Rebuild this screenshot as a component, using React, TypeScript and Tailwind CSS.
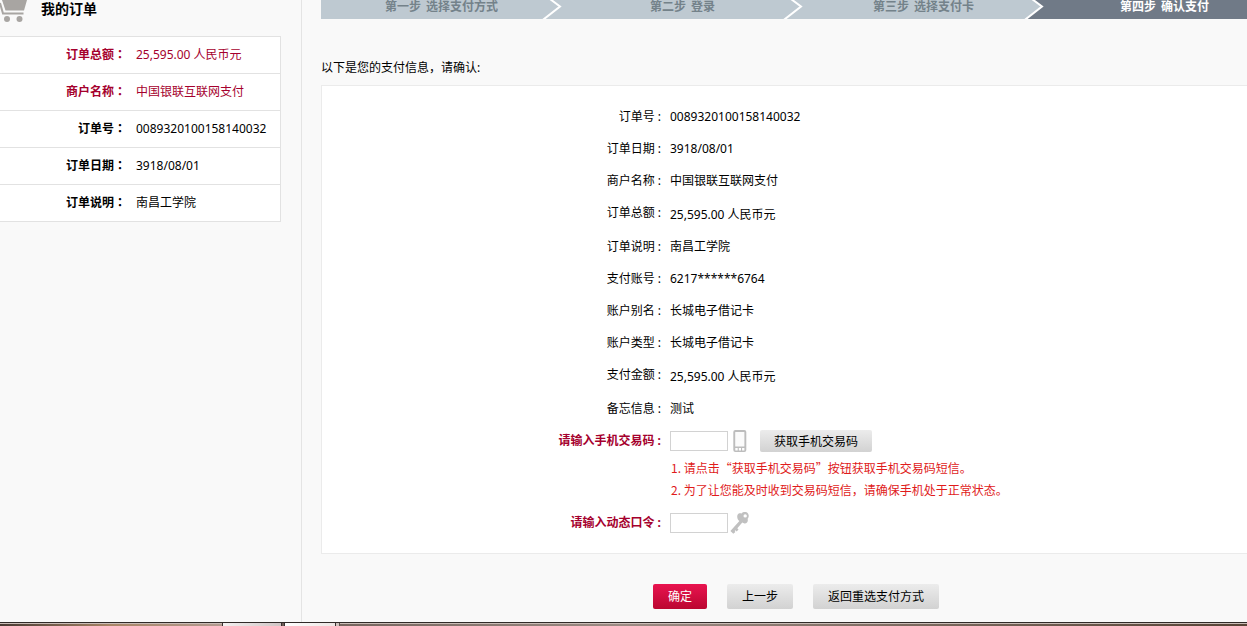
import React from "react";

const latinFirst = "font-['Noto_Sans','Noto_Sans_CJK_SC',sans-serif]";
const cjkFirst = "font-['Noto_Sans_CJK_SC',sans-serif]";
const centredColon = "font-['Noto_Sans_CJK_TC',sans-serif]";

const order = [
  { label: "订单总额", value: "25,595.00 人民币元", strong: true },
  { label: "商户名称", value: "中国银联互联网支付", strong: true },
  { label: "订单号", value: "0089320100158140032", strong: false },
  { label: "订单日期", value: "3918/08/01", strong: false },
  { label: "订单说明", value: "南昌工学院", strong: false },
];

const details = [
  { label: "订单号", value: "0089320100158140032" },
  { label: "订单日期", value: "3918/08/01" },
  { label: "商户名称", value: "中国银联互联网支付" },
  { label: "订单总额", value: "25,595.00 人民币元", amount: true },
  { label: "订单说明", value: "南昌工学院" },
  { label: "支付账号", value: "6217******6764" },
  { label: "账户别名", value: "长城电子借记卡" },
  { label: "账户类型", value: "长城电子借记卡" },
  { label: "支付金额", value: "25,595.00 人民币元", amount: true },
  { label: "备忘信息", value: "测试" },
];

const steps = [
  ["第一步", "选择支付方式"],
  ["第二步", "登录"],
  ["第三步", "选择支付卡"],
  ["第四步", "确认支付"],
];

function CartIcon() {
  return (
    <svg className="h-6 w-[30px] shrink-0" viewBox="0 0 30 24" aria-hidden="true">
      <path d="M2 0H27L24 10.500H5.500Z" fill="#a8a5a2" />
      <path d="M0 3L3 13.500H23.500" fill="none" stroke="#a8a5a2" strokeWidth="2" />
      <circle cx="7" cy="19" r="3" fill="#a8a5a2" />
      <circle cx="19.500" cy="19" r="3" fill="#a8a5a2" />
    </svg>
  );
}

function PhoneIcon() {
  return (
    <svg className="h-[22px] w-[14px] shrink-0" viewBox="0 0 14 22" aria-hidden="true">
      <rect x="0.300" y="0" width="13" height="22" rx="2" fill="#bdbdbd" />
      <rect x="2.200" y="2" width="9.200" height="14.500" rx="0.500" fill="#fbfbfb" />
      <path d="M2.300 18H4.700V20.500H2.300ZM5.800 18H8V20.500H5.800ZM9.100 18H11.400V20.500H9.100Z" fill="#fff" />
    </svg>
  );
}

function KeyIcon() {
  return (
    <svg className="h-[22px] w-5 shrink-0" viewBox="0 0 20 22" aria-hidden="true">
      <path
        d="M7.400 3.300C7.800 1.200 10.200.8 11.600 1.600C12.900-.3 16.500-.4 18 1.400C19.300 3.300 18.700 5.900 17.600 6.800C18.400 8.900 17.200 11.300 14.800 11.400C13.800 11.500 12.900 11.100 12.300 10.600L7.300 16.200L8.500 17.600L6.700 19.400L5.400 18.200L4.700 18.900L5.400 19.900L3.300 21.700L.4 19L9.400 9C7.700 8 6.800 5.500 7.400 3.300Z"
        fill="#c0c0c0"
      />
      <circle cx="15.200" cy="3.900" r="1.700" fill="#fff" />
    </svg>
  );
}

function Chevron({ active }: { active: boolean }) {
  return (
    <svg className="h-[19px] w-5 shrink-0" viewBox="0 0 20 19" aria-hidden="true">
      <rect width="20" height="19" fill={active ? "#707a87" : "#bec9d1"} />
      <path d="M0 0H9.500L18 6.500L2 19H0Z" fill="#bec9d1" />
      <path d="M8 -1L18 6.500L1 19.800" fill="none" stroke="#fff" strokeWidth="2" />
    </svg>
  );
}

const greyButton =
  "shrink-0 rounded-[2px] bg-linear-to-b from-[#ececec] to-[#d2d2d2] px-[14px] pt-px text-black";
const field = "h-5 w-[58px] shrink-0 border border-[#d2d2d2] bg-white px-1 outline-none";
const labelCell = "w-[339px] shrink-0 text-right leading-8";

function Sidebar() {
  return (
    <aside className="w-[302px] shrink-0 border-r border-[#e4e4e4]">
      <div className="flex h-9 items-start">
        <CartIcon />
        <h1 className="pl-[11px] text-[14px] leading-[18px] font-bold">我的订单</h1>
      </div>
      <dl className="mr-5 divide-y divide-[#e2e2e2] border-y border-r border-[#e2e2e2] bg-white">
        {order.map((row) => (
          <div
            key={row.label}
            className={
              row.strong
                ? "box-content flex h-9 items-center text-[#a5002d]"
                : "box-content flex h-9 items-center"
            }
          >
            <dt className="w-[126px] shrink-0 text-right leading-9 font-bold">
              {row.label}
              <span className={`${centredColon} leading-none`}>：</span>
            </dt>
            <dd className="pl-[10px] leading-9 whitespace-nowrap">{row.value}</dd>
          </div>
        ))}
      </dl>
    </aside>
  );
}

function Steps() {
  return (
    <ol className="flex h-[19px] bg-[#707a87] font-bold">
      {steps.map(([number, name], i) => {
        const last = i === steps.length - 1;
        return (
          <li
            key={number}
            className={
              last
                ? "flex w-[241px] shrink-0 text-white"
                : "flex w-[241px] shrink-0 bg-[#bec9d1] text-[#74828a]"
            }
          >
            <span
              className={
                last
                  ? "flex flex-1 justify-center gap-[5px] leading-[14px] whitespace-nowrap"
                  : "flex flex-1 justify-center gap-[5px] pl-5 leading-[14px] whitespace-nowrap"
              }
            >
              <span>{number}</span>
              <span>{name}</span>
            </span>
            {!last && <Chevron active={i === steps.length - 2} />}
          </li>
        );
      })}
    </ol>
  );
}

function PaymentForm() {
  return (
    <form onSubmit={(e) => e.preventDefault()}>
      <div className="border-y border-l border-[#ebebeb] bg-white pt-[15px] pb-[14px]">
        <dl>
          {details.map((row) => (
            <div key={row.label} className="flex">
              <dt className={labelCell}>{row.label} :</dt>
              <dd className={row.amount ? "pt-0.5 pl-[9px] leading-8" : "pl-[9px] leading-8"}>
                {row.value}
              </dd>
            </div>
          ))}
        </dl>
        <div className="flex h-8 items-center">
          <label htmlFor="sms-code" className={`${labelCell} font-bold text-[#a5002d]`}>
            请输入手机交易码 :
          </label>
          <div className="flex items-center pl-[9px]">
            <input id="sms-code" type="text" className={field} />
            <span className="flex w-8 pl-[5px]">
              <PhoneIcon />
            </span>
            <button type="button" className={`${greyButton} h-[22px]`}>
              获取手机交易码
            </button>
          </div>
        </div>
        <ol className={`${cjkFirst} pb-[6px] pl-[349px] leading-[22px] text-[#e01b1b]`}>
          <li>1. 请点击“获取手机交易码”按钮获取手机交易码短信。</li>
          <li>2. 为了让您能及时收到交易码短信，请确保手机处于正常状态。</li>
        </ol>
        <div className="flex h-8 items-center">
          <label htmlFor="token-code" className={`${labelCell} font-bold text-[#a5002d]`}>
            请输入动态口令 :
          </label>
          <div className="flex items-center pl-[9px]">
            <input id="token-code" type="text" className={field} />
            <span className="pl-0.5">
              <KeyIcon />
            </span>
          </div>
        </div>
      </div>
      <div className="flex gap-5 pt-[30px] pb-3 pl-[332px]">
        <button
          type="submit"
          className="h-[25px] shrink-0 rounded-[2px] bg-linear-to-b from-[#e91450] to-[#bb0630] px-[15px] pt-px text-white"
        >
          确定
        </button>
        <button type="button" className={`${greyButton} h-[25px] min-w-[66px]`}>
          上一步
        </button>
        <button type="button" className={`${greyButton} h-[25px] min-w-[126px]`}>
          返回重选支付方式
        </button>
      </div>
    </form>
  );
}

function DesktopEdge() {
  return (
    <footer className="flex h-1 border-t border-[#302a28] bg-linear-to-r from-[#4b3a34] via-[#9d8b84] to-[#584437]">
      <div className="h-full w-[222px] shrink-0 border-t border-[#c9bdb6] bg-linear-to-r from-[#493a33] via-[#a98567] to-[#b39a90]" />
      <div className="h-full w-[60px] shrink-0 border-x border-[#383030] bg-linear-to-r from-[#f4f1f1] to-[#cfc4c4]" />
      <div className="ml-0.5 h-full w-[52px] shrink-0 border-x border-[#383030] bg-linear-to-r from-white to-[#ece5e3]" />
      <div className="h-full w-1 shrink-0 border-r border-[#5b504c] bg-[#cdc2bd]" />
      <div className="h-full flex-1 border-t border-[#c9bdb6]" />
    </footer>
  );
}

export default function App() {
  return (
    <div
      className={`${latinFirst} flex min-h-screen flex-col overflow-x-hidden bg-[#f9f9f9] text-[12px] text-black`}
    >
      <div className="flex flex-1">
        <Sidebar />
        <main className="min-w-0 flex-1 pl-[19px]">
          <Steps />
          <p className="pt-[39px] pb-[7px] leading-5">以下是您的支付信息，请确认:</p>
          <PaymentForm />
        </main>
      </div>
      <DesktopEdge />
    </div>
  );
}
